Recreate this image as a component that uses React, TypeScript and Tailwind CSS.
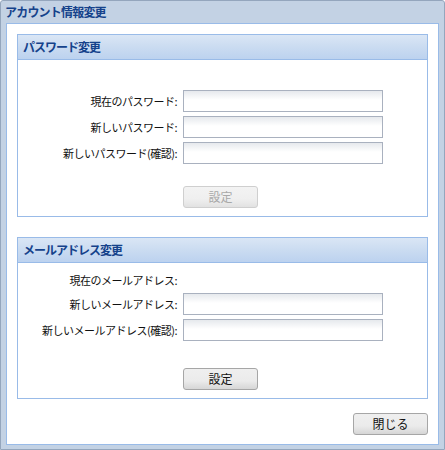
import React from "react";

const font = { fontFamily: '"Noto Sans CJK JP", "Noto Sans", sans-serif' };

function Field({ label, input = true }: { label: string; input?: boolean }) {
  return (
    <div className="flex items-center h-[22px]">
      <div className="w-[161px] text-right pr-[2px] text-[11px] tracking-[-0.5px] text-[#111] leading-none">
        {label}
      </div>
      {input && (
        <div className="ml-[4px] w-[200px] h-[22px] border border-[#a9b1bf] bg-gradient-to-b from-[#e6e9ed] via-white via-[45%] to-white" />
      )}
    </div>
  );
}

function Button({ label, disabled }: { label: string; disabled?: boolean }) {
  return (
    <div
      className={
        "w-[75px] h-[22px] rounded-[3px] border flex items-center justify-center text-[12px] leading-none bg-gradient-to-b " +
        (disabled
          ? "border-[#cfcfcf] text-[#a8a8a8] from-[#f3f3f3] via-[#efefef] via-[60%] to-[#e2e2e2]"
          : "border-[#a6a6a6] text-[#111] from-[#efefef] via-[#ebebeb] via-[60%] to-[#d6d6d6]")
      }
    >
      {label}
    </div>
  );
}

function Section({ title, children }: { title: string; children: React.ReactNode }) {
  return (
    <div className="border border-[#99bbe8] bg-white">
      <div className="h-[25px] border-b border-[#99bbe8] bg-gradient-to-b from-[#dae6f5] via-[#cbdcf1] via-[48%] to-[#bcd2ef] flex items-center px-[5px]">
        <span className="text-[12px] font-bold tracking-[-1px] text-[#15428b] leading-none">
          {title}
        </span>
      </div>
      {children}
    </div>
  );
}

export default function App() {
  return (
    <div
      style={font}
      className="w-[445px] h-[450px] bg-[#c3d2e4] border border-[#94a6bd] rounded-t-[3px] flex flex-col"
    >
      <div className="h-[22px] flex items-center px-[4px]">
        <span className="text-[12px] font-bold tracking-[-0.8px] text-[#15428b] leading-none">
          アカウント情報変更
        </span>
      </div>
      <div className="mx-[5px] mb-[4px] flex-1 border border-[#99bbe8] bg-white px-[10px] pt-[10px]">
        <Section title="パスワード変更">
          <div className="pt-[30px] pb-[8px] flex flex-col gap-[4px]">
            <Field label="現在のパスワード:" />
            <Field label="新しいパスワード:" />
            <Field label="新しいパスワード(確認):" />
            <div className="mt-[18px] pl-[165px]">
              <Button label="設定" disabled />
            </div>
          </div>
        </Section>
        <div className="h-[20px]" />
        <Section title="メールアドレス変更">
          <div className="pt-[8px] pb-[8px] flex flex-col gap-[4px]">
            <div className="h-[18px] flex items-center">
              <div className="w-[161px] text-right pr-[2px] text-[11px] tracking-[-0.5px] text-[#111] leading-none">
                現在のメールアドレス:
              </div>
            </div>
            <Field label="新しいメールアドレス:" />
            <Field label="新しいメールアドレス(確認):" />
            <div className="mt-[23px] pl-[165px]">
              <Button label="設定" />
            </div>
          </div>
        </Section>
        <div className="flex justify-end mt-[14px]">
          <Button label="閉じる" />
        </div>
      </div>
    </div>
  );
}
